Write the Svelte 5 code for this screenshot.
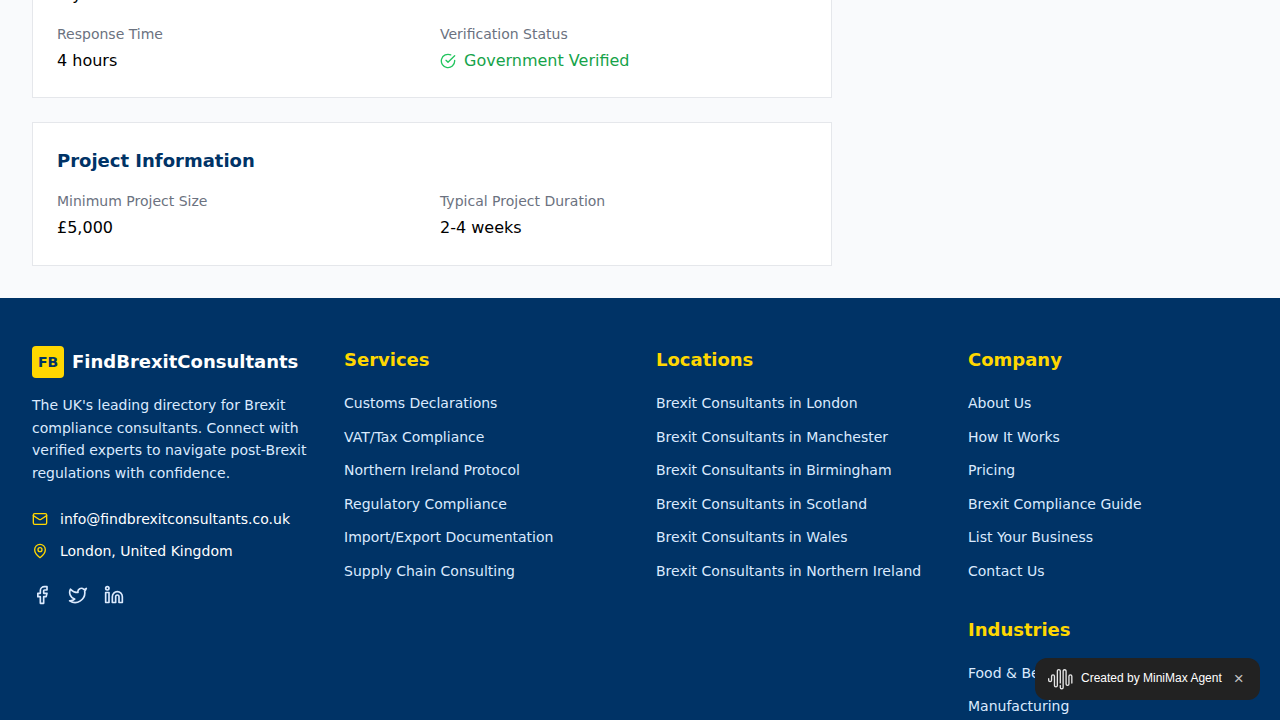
<script>
  const services = ['Customs Declarations', 'VAT/Tax Compliance', 'Northern Ireland Protocol', 'Regulatory Compliance', 'Import/Export Documentation', 'Supply Chain Consulting'];
  const locations = ['London', 'Manchester', 'Birmingham', 'Scotland', 'Wales', 'Northern Ireland'].map((l) => `Brexit Consultants in ${l}`);
  const company = ['About Us', 'How It Works', 'Pricing', 'Brexit Compliance Guide', 'List Your Business', 'Contact Us'];
  const industries = ['Food & Beverage', 'Manufacturing'];
</script>

{#snippet links(title, items)}
  <h3>{title}</h3>
  <ul>
    {#each items as item}
      <li><a href="#top">{item}</a></li>
    {/each}
  </ul>
{/snippet}

<div class="page">
  <main>
    <section class="card">
      <div class="grid">
        <div>
          <div class="value">8 years</div>
        </div>
        <div></div>
        <div>
          <div class="label">Response Time</div>
          <div class="value">4 hours</div>
        </div>
        <div>
          <div class="label">Verification Status</div>
          <div class="value verified">
            <svg class="icon" width="16" height="16" viewBox="0 0 24 24"><path d="M22 11.08V12a10 10 0 1 1-5.93-9.14" /><path d="m9 11 3 3L22 4" /></svg>
            <span>Government Verified</span>
          </div>
        </div>
      </div>
    </section>
    <section class="card">
      <h2>Project Information</h2>
      <div class="grid">
        <div>
          <div class="label">Minimum Project Size</div>
          <div class="value">£5,000</div>
        </div>
        <div>
          <div class="label">Typical Project Duration</div>
          <div class="value">2-4 weeks</div>
        </div>
      </div>
    </section>
  </main>

  <footer>
    <div>
      <div class="brand">
        <div class="mark">FB</div>
        <span>FindBrexitConsultants</span>
      </div>
      <p>The UK's leading directory for Brexit compliance consultants. Connect with verified experts to navigate post-Brexit regulations with confidence.</p>
      <div class="contact">
        <div>
          <svg class="icon" width="16" height="16" viewBox="0 0 24 24"><rect width="20" height="16" x="2" y="4" rx="2" /><path d="m22 7-8.97 5.7a1.94 1.94 0 0 1-2.06 0L2 7" /></svg>
          <span>info@findbrexitconsultants.co.uk</span>
        </div>
        <div>
          <svg class="icon" width="16" height="16" viewBox="0 0 24 24"><path d="M20 10c0 6-8 12-8 12s-8-6-8-12a8 8 0 0 1 16 0Z" /><circle cx="12" cy="10" r="3" /></svg>
          <span>London, United Kingdom</span>
        </div>
      </div>
      <div class="social">
        <svg class="icon" width="20" height="20" viewBox="0 0 24 24"><path d="M18 2h-3a5 5 0 0 0-5 5v3H7v4h3v8h4v-8h3l1-4h-4V7a1 1 0 0 1 1-1h3z" /></svg>
        <svg class="icon" width="20" height="20" viewBox="0 0 24 24"><path d="M22 4s-.7 2.1-2 3.4c1.6 10-9.4 17.3-18 11.6 2.2.1 4.4-.6 6-2C3 15.5.5 9.6 3 5c2.2 2.6 5.6 4.1 9 4-.9-4.2 4-6.6 7-3.8 1.1 0 3-1.2 3-1.2z" /></svg>
        <svg class="icon" width="20" height="20" viewBox="0 0 24 24"><path d="M16 8a6 6 0 0 1 6 6v7h-4v-7a2 2 0 0 0-2-2 2 2 0 0 0-2 2v7h-4v-7a6 6 0 0 1 6-6z" /><rect width="4" height="12" x="2" y="9" /><circle cx="4" cy="4" r="2" /></svg>
      </div>
    </div>
    <div>{@render links('Services', services)}</div>
    <div>{@render links('Locations', locations)}</div>
    <div class="stack">
      <div>{@render links('Company', company)}</div>
      <div>{@render links('Industries', industries)}</div>
    </div>
  </footer>

  <div class="badge">
    <svg width="24.5" height="24.5" viewBox="0 0 24 24" fill="#e6e6e6"><path d="M16.278 2c1.156 0 2.093.927 2.093 2.07v12.501a.74.74 0 00.744.709.74.74 0 00.743-.709V9.099a2.06 2.06 0 012.071-2.049A2.06 2.06 0 0124 9.1v6.561a.649.649 0 01-.652.645.649.649 0 01-.653-.645V9.1a.762.762 0 00-.766-.758.762.762 0 00-.766.758v7.472a2.037 2.037 0 01-2.048 2.026 2.037 2.037 0 01-2.048-2.026v-12.5a.785.785 0 00-.788-.753.785.785 0 00-.789.752l-.001 15.904A2.037 2.037 0 0113.441 22a2.037 2.037 0 01-2.048-2.026V18.04c0-.356.292-.645.652-.645.36 0 .652.289.652.645v1.934c0 .263.142.506.372.638.23.131.514.131.744 0a.734.734 0 00.372-.638V4.07c0-1.143.937-2.07 2.093-2.07zm-5.674 0c1.156 0 2.093.927 2.093 2.07v11.523a.648.648 0 01-.652.645.648.648 0 01-.652-.645V4.07a.785.785 0 00-.789-.78.785.785 0 00-.789.78v14.013a2.06 2.06 0 01-2.07 2.048 2.06 2.06 0 01-2.071-2.048V9.1a.762.762 0 00-.766-.758.762.762 0 00-.766.758v3.8a2.06 2.06 0 01-2.071 2.049A2.06 2.06 0 010 12.9v-1.378c0-.357.292-.646.652-.646.36 0 .653.29.653.646V12.9c0 .418.343.757.766.757s.766-.339.766-.757V9.099a2.06 2.06 0 012.07-2.048 2.06 2.06 0 012.071 2.048v8.984c0 .419.343.758.767.758.423 0 .766-.339.766-.758V4.07c0-1.143.937-2.07 2.093-2.07z" /></svg>
    <span class="by">Created by MiniMax Agent</span>
    <span class="close">×</span>
  </div>
</div>

<style>
  :global(body) { margin: 0; }
  .page {
    box-sizing: border-box;
    height: 720px;
    overflow: hidden;
    display: flex;
    flex-direction: column;
    background: #f9fafc;
    color: #000;
    font: 16px/1.6 "DejaVu Sans", sans-serif;
  }
  .page :global(*) { box-sizing: border-box; }
  main {
    flex: none;
    height: 298px;
    padding: 0 32px 32px;
    display: flex;
    flex-direction: column;
    justify-content: flex-end;
    gap: 24px;
  }
  .card {
    flex: none;
    width: 800px;
    padding: 24px;
    background: #fff;
    border: 1px solid #e5e7eb;
  }
  h2, h3, p, ul { margin: 0; padding: 0; }
  h2 { font-size: 18px; line-height: 28px; color: #003366; margin-bottom: 16px; }
  .grid { display: grid; grid-template-columns: 1fr 1fr; gap: 16px; }
  .label { font-size: 14px; line-height: 20px; color: #6b7280; margin-bottom: 4px; }
  .verified { display: flex; align-items: center; gap: 8px; color: #16a34a; }
  .verified svg { color: #22c55e; }
  .icon {
    display: block;
    flex: none;
    fill: none;
    stroke: currentColor;
    stroke-width: 2;
    stroke-linecap: round;
    stroke-linejoin: round;
  }
  footer {
    flex: 1;
    min-height: 0;
    padding: 48px 32px 0;
    display: grid;
    grid-template-columns: repeat(4, 1fr);
    align-items: start;
    gap: 32px;
    background: #003366;
    color: #fff;
  }
  .brand { display: flex; align-items: center; gap: 8px; height: 32px; margin-bottom: 16px; font-size: 18px; line-height: 28px; font-weight: 700; }
  .mark {
    display: grid;
    place-items: center;
    width: 32px;
    height: 32px;
    border-radius: 4px;
    background: #ffd700;
    color: #003366;
    font-size: 14px;
    line-height: 20px;
  }
  p { font-size: 14px; line-height: 22.7px; color: #dbeafe; margin-bottom: 24.2px; }
  .contact { display: grid; gap: 12px; font-size: 14px; line-height: 20px; }
  .contact div { display: flex; align-items: center; gap: 12px; }
  .contact svg { color: #ffd700; }
  .social { display: flex; gap: 16px; margin-top: 24px; color: #dbeafe; }
  h3 { font-size: 18px; line-height: 28px; color: #ffd700; margin-bottom: 16px; }
  ul { list-style: none; display: flex; flex-direction: column; gap: 8px; }
  li { height: 25.6px; }
  a { font-size: 14px; line-height: 20px; color: #dbeafe; text-decoration: none; }
  .stack { display: flex; flex-direction: column; gap: 32px; }
  .badge {
    position: absolute;
    right: 20px;
    bottom: 20px;
    width: 225px;
    height: 42px;
    padding: 0 13px;
    display: flex;
    align-items: center;
    border-radius: 12px;
    background: #222;
    color: #fff;
    font: 12px/18px "Liberation Sans", Arial, sans-serif;
  }
  .by { margin-left: 8.5px; padding-bottom: 2px; white-space: nowrap; }
  .close { margin-left: 12px; padding-bottom: 1px; font-size: 17px; color: #c4c4c4; }
</style>
